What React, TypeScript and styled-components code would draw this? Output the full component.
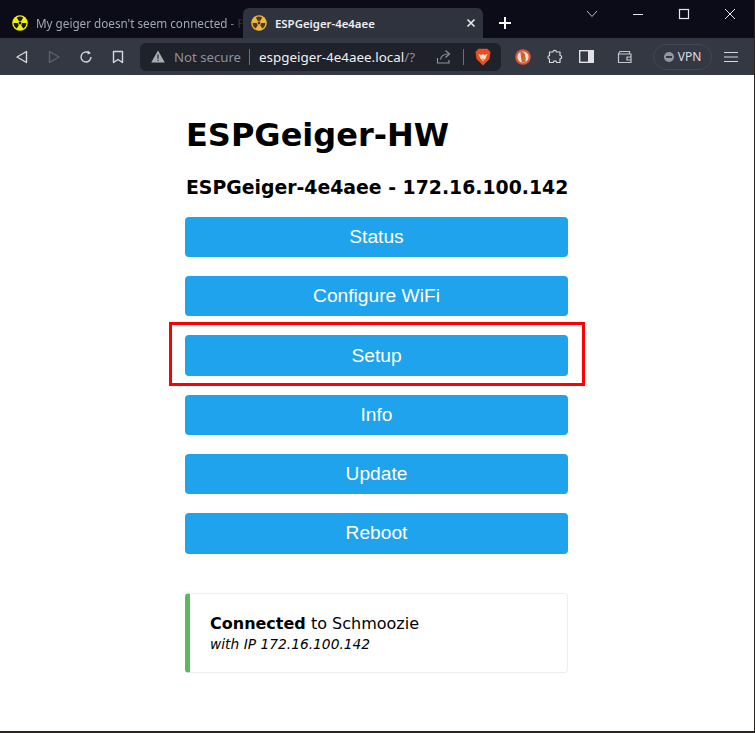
import React from 'react'
import styled, { createGlobalStyle } from 'styled-components'

const GlobalStyle = createGlobalStyle`
  html, body {
    margin: 0;
    padding: 0;
    background: #fff;
  }
  * {
    box-sizing: border-box;
  }
`

const Window = styled.div`
  width: 755px;
  height: 733px;
  display: flex;
  flex-direction: column;
  overflow: hidden;
  background: #fff;
  border-right: 1px solid #2a2320;
  border-bottom: 2px solid #2a2320;
`

const TabStrip = styled.div`
  height: 38px;
  flex: none;
  display: flex;
  align-items: flex-end;
  background: #0b0c17;
  font-family: 'Noto Sans', 'Open Sans', sans-serif;
`

const Tab = styled.div<{ $active?: boolean }>`
  height: 30px;
  display: flex;
  align-items: center;
  white-space: nowrap;
  flex: none;
  border-radius: 6px 6px 0 0;
  width: ${({ $active }) => ($active ? '240px' : '243px')};
  padding-left: ${({ $active }) => ($active ? '8px' : '12px')};
  background: ${({ $active }) => ($active ? '#2f333e' : 'transparent')};
`

const TabTitle = styled.span<{ $active?: boolean }>`
  flex: 1;
  margin-left: 8px;
  font-size: ${({ $active }) => ($active ? '11.4px' : '11.7px')};
  color: ${({ $active }) => ($active ? '#eceef2' : '#a2a7b1')};
  font-weight: ${({ $active }) => ($active ? 600 : 400)};
  mask-image: ${({ $active }) => ($active ? 'none' : 'linear-gradient(to right, #000 92%, transparent 100%)')};
`

const TabClose = styled.svg`
  flex: none;
  width: 10px;
  height: 10px;
  margin-right: 7px;
`

const NewTab = styled.svg`
  flex: none;
  width: 14px;
  height: 14px;
  margin: 0 0 8px 15px;
`

const WindowControls = styled.div`
  margin-left: auto;
  align-self: flex-start;
  display: flex;
  align-items: center;
  height: 28px;
  padding-right: 18px;
  gap: 34px;
`

const Toolbar = styled.div`
  height: 37px;
  flex: none;
  display: flex;
  align-items: center;
  background: #343843;
  font-family: 'Noto Sans', 'Open Sans', sans-serif;
`

const NavGroup = styled.div`
  display: flex;
  align-items: center;
  gap: 16px;
  padding-left: 14px;
  width: 140px;
  flex: none;
`

const AddressBar = styled.div`
  width: 361px;
  height: 28px;
  flex: none;
  display: flex;
  align-items: center;
  background: #1f222b;
  border-radius: 6px;
  padding-left: 11px;
`

const NotSecure = styled.span`
  font-size: 13.2px;
  color: #8c919b;
  margin: 0 8px 0 9px;
`

const Divider = styled.span`
  width: 1px;
  height: 16px;
  background: #6b7079;
  flex: none;
`

const Url = styled.span`
  font-size: 13.4px;
  color: #eef0f3;
  margin-left: 9px;
  white-space: nowrap;
`

const UrlDim = styled.span`
  color: #8c919b;
`

const AddressActions = styled.div`
  margin-left: auto;
  display: flex;
  align-items: center;
  gap: 11px;
  padding-right: 10px;
`

const ExtensionGroup = styled.div`
  display: flex;
  align-items: center;
  margin-left: 14px;
  flex: 1;
`

const ExtensionSlot = styled.div<{ $width: number }>`
  width: ${({ $width }) => $width}px;
  flex: none;
  display: flex;
  align-items: center;
`

const VpnPill = styled.div`
  display: flex;
  align-items: center;
  gap: 4px;
  height: 26px;
  width: 59px;
  flex: none;
  justify-content: center;
  border: 1px solid #42475a;
  border-radius: 13px;
  font-size: 12px;
  color: #d9dce2;
  margin-right: 12px;
`

const VpnDot = styled.span`
  width: 10px;
  height: 10px;
  border-radius: 50%;
  background: #9398a2;
  display: flex;
  align-items: center;
  justify-content: center;
  &::after {
    content: '';
    width: 6px;
    height: 2px;
    background: #343843;
  }
`

const Page = styled.main`
  flex: 1;
  display: flex;
  justify-content: center;
  background: #fff;
`

const Content = styled.div`
  width: 383px;
  margin-left: -1px;
  font-family: 'DejaVu Sans', Verdana, sans-serif;
  color: #000;
`

const Title = styled.h1`
  margin: 39px 0 0 1px;
  font-size: 32px;
  line-height: 42px;
  font-weight: 700;
  white-space: nowrap;
`

const Subtitle = styled.h3`
  margin: 20px 0 0 1px;
  font-size: 18.85px;
  line-height: 24px;
  font-weight: 700;
  white-space: nowrap;
`

const Menu = styled.div`
  margin-top: 16.7px;
  display: flex;
  flex-direction: column;
  gap: 19px;
`

const MenuItem = styled.div<{ $highlight?: boolean }>`
  position: relative;
  &::after {
    content: ${({ $highlight }) => ($highlight ? "''" : 'none')};
    position: absolute;
    left: -16px;
    right: -17px;
    top: -13.4px;
    bottom: -10px;
    border: 3px solid #f00;
    pointer-events: none;
  }
`

const MenuButton = styled.button`
  display: block;
  width: 100%;
  height: 40.33px;
  padding: 0;
  border: 0;
  border-radius: 4px;
  background: #1fa3ec;
  color: #fff;
  font-family: 'Liberation Sans', Arial, sans-serif;
  font-size: 19.2px;
  line-height: 38px;
`

const StatusCard = styled.div`
  margin-top: 39px;
  height: 80px;
  padding: 20px 20px 0;
  border: 1px solid #eee;
  border-left: 5px solid #5cb85c;
  border-radius: 4px;
`

const StatusLine = styled.div`
  font-size: 16px;
  line-height: 20px;
  white-space: nowrap;
`

const StatusDetail = styled.div`
  font-size: 13.8px;
  line-height: 20px;
  font-style: italic;
  white-space: nowrap;
`

const IconSvg = styled.svg`
  flex: none;
  display: block;
`

const Radiation = ({ bg, fg }: { bg: string; fg: string }) => {
  const blade = 'M8 8 L4.8 2.5 A6.4 6.4 0 0 1 11.2 2.5 Z'
  return (
    <IconSvg width="16" height="16" viewBox="0 0 16 16">
      <circle cx="8" cy="8" r="7.8" fill={bg} />
      <path d={blade} fill={fg} />
      <path d={blade} fill={fg} transform="rotate(120 8 8)" />
      <path d={blade} fill={fg} transform="rotate(240 8 8)" />
      <circle cx="8" cy="8" r="2.2" fill={bg} />
      <circle cx="8" cy="8" r="1.4" fill={fg} />
    </IconSvg>
  )
}

const Stroke = ({ w = 16, h = 16, color = '#d5d8de', sw = 1.4, children }: { w?: number; h?: number; color?: string; sw?: number; children: React.ReactNode }) => (
  <IconSvg width={w} height={h} viewBox={`0 0 ${w} ${h}`} fill="none" stroke={color} strokeWidth={sw}>
    {children}
  </IconSvg>
)

export default function App() {
  return (
    <>
      <GlobalStyle />
      <Window>
        <TabStrip>
          <Tab>
            <Radiation bg="#f2ee10" fg="#15150a" />
            <TabTitle>My geiger doesn't seem connected - P</TabTitle>
          </Tab>
          <Tab $active>
            <Radiation bg="#f2b63c" fg="#4a3a1e" />
            <TabTitle $active>ESPGeiger-4e4aee</TabTitle>
            <TabClose viewBox="0 0 10 10" fill="none" stroke="#e8eaee" strokeWidth="1.6">
              <path d="M1.5 1.5 L8.5 8.5 M8.5 1.5 L1.5 8.5" />
            </TabClose>
          </Tab>
          <NewTab viewBox="0 0 14 14" fill="none" stroke="#fff" strokeWidth="2">
            <path d="M7 1 V13 M1 7 H13" />
          </NewTab>
          <WindowControls>
            <Stroke w={12} h={10} color="#b4b7be" sw={1}>
              <path d="M1 2 L6 7.5 L11 2" />
            </Stroke>
            <Stroke w={12} h={12} color="#e6e8ec" sw={1}>
              <path d="M1 6.5 H11" />
            </Stroke>
            <Stroke w={12} h={12} color="#e6e8ec" sw={1.2}>
              <rect x="1.5" y="1.5" width="9" height="9" />
            </Stroke>
            <Stroke w={12} h={12} color="#e6e8ec" sw={1}>
              <path d="M1 1 L11 11 M11 1 L1 11" />
            </Stroke>
          </WindowControls>
        </TabStrip>
        <Toolbar>
          <NavGroup>
            <Stroke>
              <path d="M12.5 2.5 V13.5 L3 8 Z" strokeLinejoin="round" />
            </Stroke>
            <Stroke color="#5c616d">
              <path d="M3.5 2.5 V13.5 L13 8 Z" strokeLinejoin="round" />
            </Stroke>
            <Stroke>
              <path d="M13 8 A5 5 0 1 1 11 4" />
              <path d="M9.8 1.5 L13 4.2 L9.6 5.6 Z" fill="#d5d8de" stroke="none" />
            </Stroke>
            <Stroke>
              <path d="M3.5 2.5 H12.5 V13.5 L8 10.5 L3.5 13.5 Z" strokeLinejoin="round" />
            </Stroke>
          </NavGroup>
          <AddressBar>
            <IconSvg width="14" height="13" viewBox="0 0 14 13">
              <path d="M7 0.5 L13.8 12.5 H0.2 Z" fill="#a8acb4" />
              <path d="M6.4 4.5 H7.6 V8.8 H6.4 Z M6.4 9.8 H7.6 V11 H6.4 Z" fill="#1f222b" />
            </IconSvg>
            <NotSecure>Not secure</NotSecure>
            <Divider />
            <Url>
              espgeiger-4e4aee.local<UrlDim>/?</UrlDim>
            </Url>
            <AddressActions>
              <Stroke color="#8c919b" sw={1.2}>
                <path d="M1.5 9 V14 H13 V11" />
                <path d="M4.5 10.5 C5 6.5 8 5 12.5 5" />
                <path d="M9.5 1.5 L13.5 5 L9.5 8.5" />
              </Stroke>
              <Divider />
              <IconSvg width="16" height="18" viewBox="0 0 16 18">
                <path d="M3.5 0.8 H12.5 L15.5 4 L14.5 11 L8 17.5 L1.5 11 L0.5 4 Z" fill="#e8501c" />
                <path d="M3.5 6 L6.5 7 L8 6.3 L9.5 7 L12.5 6 L10.5 10.5 L8 13 L5.5 10.5 Z" fill="#fbe3d6" />
                <path d="M6.8 10.8 H9.2 L8 12.2 Z" fill="#e8501c" />
              </IconSvg>
            </AddressActions>
          </AddressBar>
          <ExtensionGroup>
            <ExtensionSlot $width={32}>
              <IconSvg width="16" height="16" viewBox="0 0 16 16">
                <circle cx="8" cy="8" r="7.8" fill="#de5833" />
                <circle cx="8" cy="8" r="5.6" fill="#f6e3da" />
                <path d="M5.5 3 C8 2.4 10.5 4 10.2 7 L10.6 13 H6.8 L5.8 7 Z" fill="#de5833" />
                <path d="M7.6 9.5 L11 8.6 V10.6 L7.6 10.6 Z" fill="#5fb03a" />
              </IconSvg>
            </ExtensionSlot>
            <ExtensionSlot $width={32}>
              <Stroke sw={1.2}>
                <path d="M6 3 C6 0.8 9.4 0.8 9.4 3 H13 V6.5 C15.2 6.5 15.2 9.8 13 9.8 V13.5 H9.6 C9.6 11.4 6.2 11.4 6.2 13.5 H2.5 V10 C0.5 10 0.5 6.6 2.5 6.6 V3 Z" strokeLinejoin="round" />
              </Stroke>
            </ExtensionSlot>
            <ExtensionSlot $width={38}>
              <IconSvg width="15" height="13" viewBox="0 0 15 13">
                <rect x="0.7" y="0.7" width="13.6" height="11.6" fill="none" stroke="#e0e2e7" strokeWidth="1.4" />
                <rect x="9" y="0.7" width="5.3" height="11.6" fill="#e0e2e7" />
              </IconSvg>
            </ExtensionSlot>
            <ExtensionSlot $width={36}>
              <Stroke w={16} h={14} color="#c3c6cd" sw={1.2}>
                <path d="M1.5 3 V12.5 H14 V4 H1.5 M2 3 L3 1.5 H12.5 V4" />
                <path d="M14 7 H10 V10 H14" />
              </Stroke>
            </ExtensionSlot>
            <VpnPill>
              <VpnDot />
              VPN
            </VpnPill>
            <Stroke w={14} h={12} sw={1.2}>
              <path d="M0 1.5 H14 M0 6 H14 M0 10.5 H14" />
            </Stroke>
          </ExtensionGroup>
        </Toolbar>
        <Page>
          <Content>
            <Title>ESPGeiger-HW</Title>
            <Subtitle>ESPGeiger-4e4aee - 172.16.100.142</Subtitle>
            <Menu>
              <MenuItem><MenuButton>Status</MenuButton></MenuItem>
              <MenuItem><MenuButton>Configure WiFi</MenuButton></MenuItem>
              <MenuItem $highlight><MenuButton>Setup</MenuButton></MenuItem>
              <MenuItem><MenuButton>Info</MenuButton></MenuItem>
              <MenuItem><MenuButton>Update</MenuButton></MenuItem>
              <MenuItem><MenuButton>Reboot</MenuButton></MenuItem>
            </Menu>
            <StatusCard>
              <StatusLine><strong>Connected</strong> to Schmoozie</StatusLine>
              <StatusDetail>with IP 172.16.100.142</StatusDetail>
            </StatusCard>
          </Content>
        </Page>
      </Window>
    </>
  )
}
